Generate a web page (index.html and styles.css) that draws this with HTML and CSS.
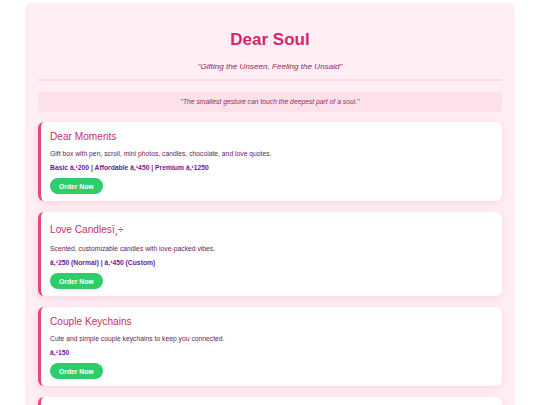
FILE: index.html
```html
<!DOCTYPE html>
<html>
<head>
<meta charset="utf-8">
<title>Dear Soul</title>
<link rel="stylesheet" href="styles.css">
</head>
<body>
<div class="container">
  <header class="header">
    <h1 class="title">Dear Soul</h1>
    <p class="tagline">"Gifting the Unseen, Feeling the Unsaid"</p>
  </header>
  <div class="quote">"The smallest gesture can touch the deepest part of a soul."</div>
  <div class="card">
    <h2 class="card-title">Dear Moments</h2>
    <p class="card-desc">Gift box with pen, scroll, mini photos, candles, chocolate, and love quotes.</p>
    <p class="card-price">Basic â‚¹200 | Affordable â‚¹450 | Premium â‚¹1250</p>
    <button class="order-btn">Order Now</button>
  </div>
  <div class="card">
    <h2 class="card-title card-title-tall">Love Candlesï¸÷</h2>
    <p class="card-desc">Scented, customizable candles with love-packed vibes.</p>
    <p class="card-price">â‚¹250 (Normal) | â‚¹450 (Custom)</p>
    <button class="order-btn">Order Now</button>
  </div>
  <div class="card">
    <h2 class="card-title">Couple Keychains</h2>
    <p class="card-desc">Cute and simple couple keychains to keep you connected.</p>
    <p class="card-price">â‚¹150</p>
    <button class="order-btn">Order Now</button>
  </div>
  <div class="card">
    <h2 class="card-title">Memory Jar</h2>
    <p class="card-desc">A jar full of little notes and memories.</p>
    <p class="card-price">â‚¹300</p>
    <button class="order-btn">Order Now</button>
  </div>
</div>
</body>
</html>
```
FILE: styles.css
```css
html, body {
  margin: 0;
  padding: 0;
  background: #ffffff;
}
body {
  font-family: "Liberation Sans", Arial, sans-serif;
}
.container {
  width: 490px;
  margin: 3px auto 0;
  padding: 0 13px 20px;
  box-sizing: border-box;
  background: #ffeef4;
  border-radius: 6px;
  display: flex;
  flex-direction: column;
}
.header {
  text-align: center;
  padding-top: 27px;
  padding-bottom: 7px;
  border-bottom: 2px solid #ffd6e5;
}
.title {
  margin: 0;
  font-size: 17px;
  line-height: 20px;
  font-weight: bold;
  color: #d6246b;
}
.tagline {
  margin: 12px 0 0;
  font-size: 8.1px;
  line-height: 10px;
  font-style: italic;
  color: #8e2a5e;
}
.quote {
  margin-top: 11px;
  padding: 5px;
  background: #fce1eb;
  border-radius: 4px;
  text-align: center;
  font-size: 6.77px;
  line-height: 10px;
  font-style: italic;
  color: #8b2f5c;
}
.card {
  margin-top: 10px;
  background: #ffffff;
  border-left: 3px solid #e4477d;
  border-radius: 6px;
  padding: 8px 9px 7px;
  box-shadow: 0 2px 7px rgba(214, 51, 108, 0.13);
  display: flex;
  flex-direction: column;
  align-items: flex-start;
}
.card + .card {
  margin-top: 11px;
}
.card-title {
  margin: 0;
  font-size: 10.15px;
  line-height: 14px;
  font-weight: normal;
  color: #c8306a;
}
.card-title-tall {
  line-height: 18px;
  margin-top: 1px;
}
.card-desc {
  margin: 4.5px 0 0;
  font-size: 6.77px;
  line-height: 9px;
  color: #6a2558;
}
.card-price {
  margin: 5px 0 0;
  font-size: 6.77px;
  line-height: 9px;
  font-weight: bold;
  color: #6a1b9a;
}
.order-btn {
  margin-top: 6.5px;
  height: 16px;
  padding: 0 9px;
  border: none;
  border-radius: 8px;
  background: #2ecc6b;
  color: #ffffff;
  font-family: "Liberation Sans", Arial, sans-serif;
  font-size: 6.77px;
  font-weight: bold;
  cursor: pointer;
}
```
